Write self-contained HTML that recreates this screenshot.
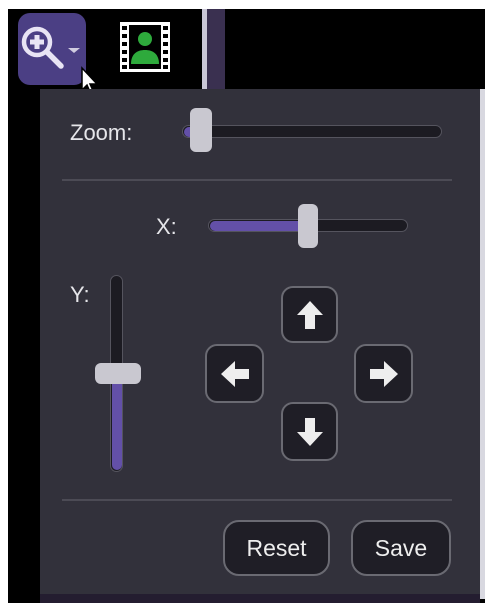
<!DOCTYPE html>
<html><head><style>
body{margin:0;width:494px;height:612px;background:#fff;position:relative;overflow:hidden;font-family:"Liberation Sans",sans-serif}
.a{position:absolute}
.btn{position:absolute;background:#1f1e26;border:2px solid #6a6a72;border-radius:12px;box-sizing:border-box;display:flex;align-items:center;justify-content:center;color:#eee}
.lbl{position:absolute;color:#e6e6ea;font-size:22px}
</style></head><body>
<div class="a" style="left:8px;top:9px;width:477px;height:594px;background:#000"></div>
<div class="a" style="left:202px;top:9px;width:5px;height:594px;background:#c9c6d6"></div>
<div class="a" style="left:207px;top:9px;width:18px;height:594px;background:#3a3050"></div>
<div class="a" style="left:40px;top:594px;width:440px;height:9px;background:#241d30"></div>
<div class="a" style="left:480px;top:89px;width:5px;height:510px;background:#d8d8e0"></div>
<div class="a" style="left:18px;top:13px;width:68px;height:72px;background:#4b3f84;border-radius:12px"></div>
<svg class="a" style="left:18px;top:13px" width="68" height="72">
<circle cx="19" cy="29" r="13" fill="none" stroke="#e8e4f4" stroke-width="4.5"/>
<path d="M19 22v14M12 29h14" stroke="#e8e4f4" stroke-width="5"/>
<path d="M29 39l14 14" stroke="#e8e4f4" stroke-width="5.5" stroke-linecap="round"/>
<path d="M50 35h12l-6 5z" fill="#d0cce0"/>
</svg>
<svg class="a" style="left:80px;top:66px" width="22" height="30"><path d="M2 2v22l5-5 4 9 3-1-4-9h7z" fill="#fff" stroke="#000" stroke-width="1.5"/></svg>
<svg class="a" style="left:120px;top:22px" width="50" height="50">
<rect x="0" y="0" width="50" height="50" fill="#fff"/>
<rect x="9" y="3" width="32" height="44" fill="#000"/>
<g fill="#000"><rect x="2" y="4" width="5" height="4"/><rect x="2" y="12" width="5" height="4"/><rect x="2" y="20" width="5" height="4"/><rect x="2" y="28" width="5" height="4"/><rect x="2" y="36" width="5" height="4"/><rect x="2" y="43" width="5" height="4"/>
<rect x="43" y="4" width="5" height="4"/><rect x="43" y="12" width="5" height="4"/><rect x="43" y="20" width="5" height="4"/><rect x="43" y="28" width="5" height="4"/><rect x="43" y="36" width="5" height="4"/><rect x="43" y="43" width="5" height="4"/></g>
<circle cx="25" cy="17" r="7" fill="#2eaa3c"/>
<path d="M11 42c0-10 6-14 14-14s14 4 14 14z" fill="#2eaa3c"/>
</svg>
<div class="a" style="left:40px;top:89px;width:440px;height:505px;background:#32313b"></div>
<div class="lbl" style="left:70px;top:120px">Zoom:</div>
<div class="a" style="left:182px;top:125px;width:258px;height:11px;background:#1c1b22;border:1.5px solid #55545e;border-radius:7px"></div>
<div class="a" style="left:184px;top:127px;width:12px;height:10px;background:#6350a8;border-radius:5px"></div>
<div class="a" style="left:190px;top:108px;width:22px;height:44px;background:#c9c8d0;border-radius:6px"></div>
<div class="a" style="left:62px;top:179px;width:390px;height:2px;background:#4c4b55"></div>
<div class="lbl" style="left:156px;top:214px">X:</div>
<div class="a" style="left:208px;top:219px;width:198px;height:11px;background:#1c1b22;border:1.5px solid #55545e;border-radius:7px"></div>
<div class="a" style="left:210px;top:221px;width:95px;height:10px;background:#6350a8;border-radius:5px"></div>
<div class="a" style="left:298px;top:204px;width:20px;height:44px;background:#c9c8d0;border-radius:6px"></div>
<div class="lbl" style="left:70px;top:282px">Y:</div>
<div class="a" style="left:110px;top:275px;width:11px;height:195px;background:#1c1b22;border:1.5px solid #55545e;border-radius:7px"></div>
<div class="a" style="left:112px;top:375px;width:10px;height:95px;background:#6350a8;border-radius:5px"></div>
<div class="a" style="left:95px;top:363px;width:46px;height:21px;background:#c9c8d0;border-radius:6px"></div>
<div class="btn" style="left:281px;top:286px;width:57px;height:57px"><svg width="34" height="34"><path d="M17 3L4 17h8v14h10V17h8z" fill="#eee"/></svg></div>
<div class="btn" style="left:205px;top:344px;width:59px;height:59px"><svg width="34" height="34"><path d="M3 17L17 4v8h14v10H17v8z" fill="#eee"/></svg></div>
<div class="btn" style="left:354px;top:344px;width:59px;height:59px"><svg width="34" height="34"><path d="M31 17L17 4v8H3v10h14v8z" fill="#eee"/></svg></div>
<div class="btn" style="left:281px;top:402px;width:57px;height:59px"><svg width="34" height="34"><path d="M17 31L4 17h8V3h10v14h8z" fill="#eee"/></svg></div>
<div class="a" style="left:62px;top:499px;width:390px;height:2px;background:#4c4b55"></div>
<div class="btn" style="left:223px;top:520px;width:107px;height:56px;border-radius:16px;font-size:23px">Reset</div>
<div class="btn" style="left:351px;top:520px;width:100px;height:56px;border-radius:16px;font-size:23px">Save</div>
</body></html>
